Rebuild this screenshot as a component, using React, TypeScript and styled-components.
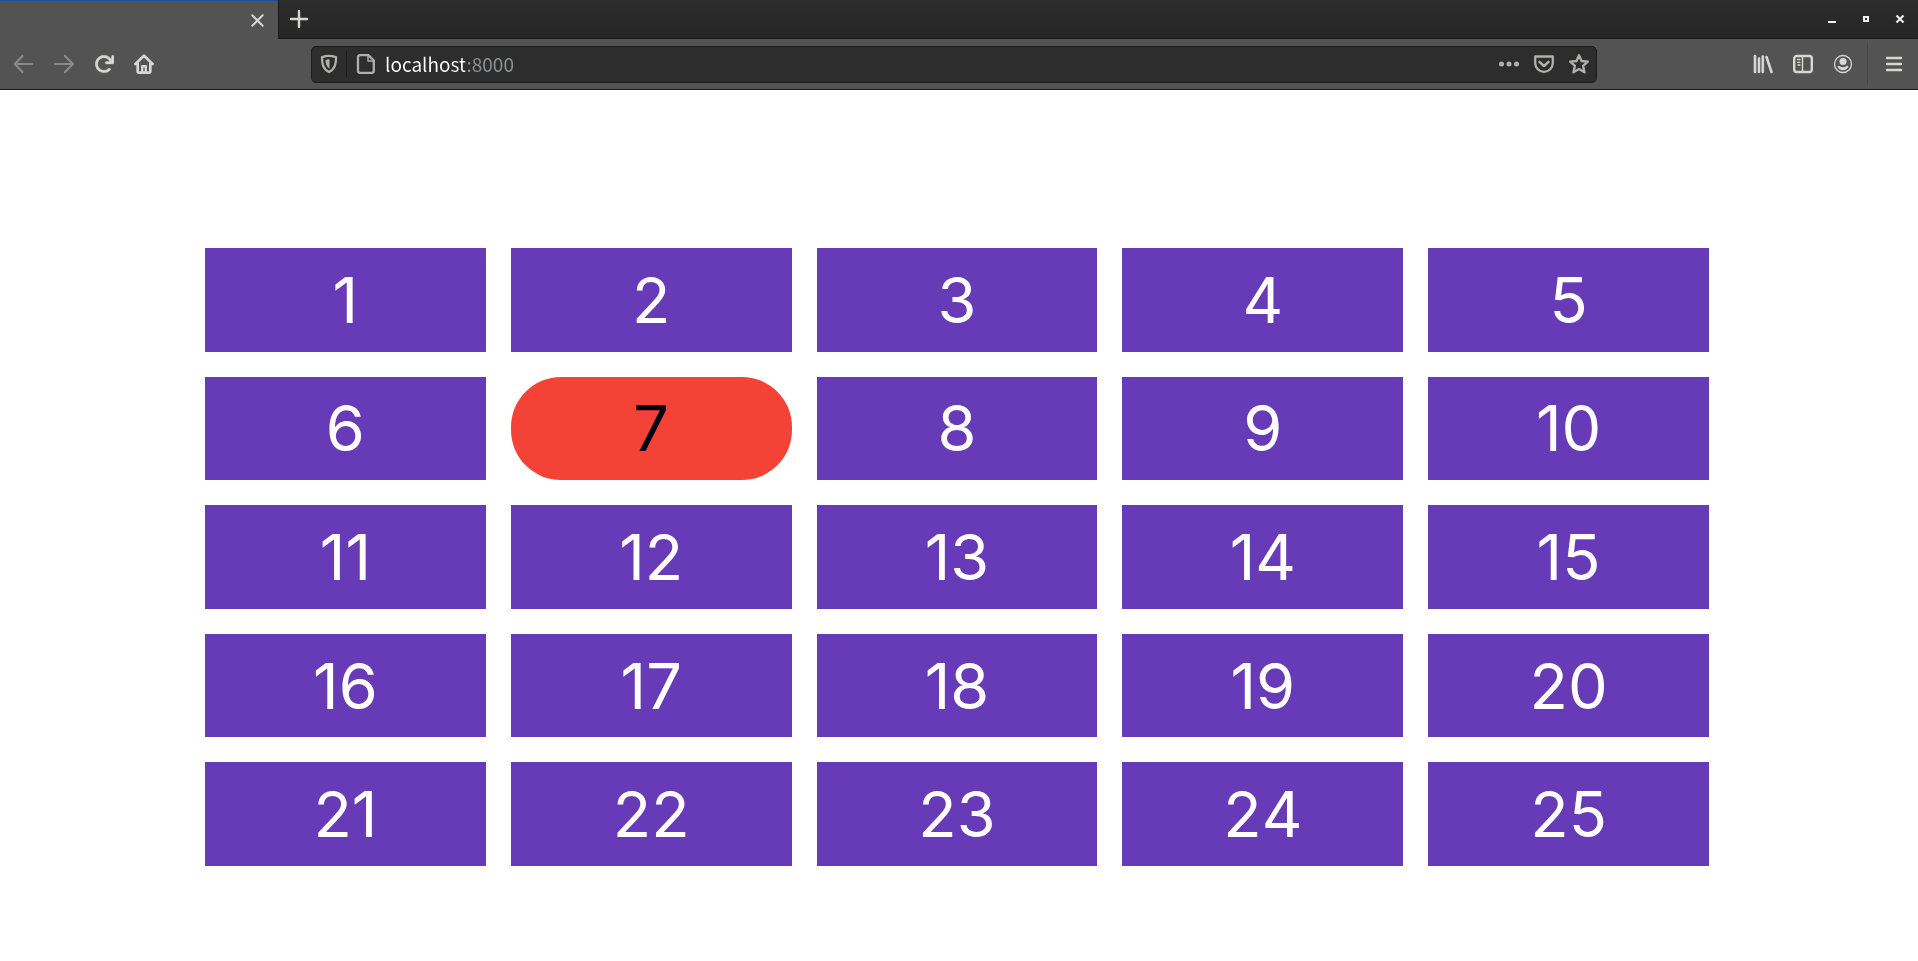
import React from "react";
import styled, { createGlobalStyle } from "styled-components";

const GlobalStyle = createGlobalStyle`
  *, *::before, *::after { box-sizing: border-box; }
  body {
    margin: 0;
    background: #ffffff;
    font-family: Inter, "Liberation Sans", sans-serif;
  }
`;

const Page = styled.div`
  display: flex;
  flex-direction: column;
  min-height: 100vh;
`;

const TitleBar = styled.header`
  display: flex;
  align-items: stretch;
  height: 39px;
  background: linear-gradient(#2c2c2c, #262626);
`;

const Tab = styled.div`
  display: flex;
  align-items: center;
  justify-content: flex-end;
  width: 278px;
  padding-right: 11px;
  background: #535353;
  border-top: 1px solid #15539e;
`;

const TabStrip = styled.div`
  display: flex;
  flex: 1;
  align-items: center;
  justify-content: space-between;
  padding-right: 1px;
  border-left: 1px solid #1a1a1a;
  border-bottom: 1px solid #1a1a1a;
`;

const WindowControls = styled.div`
  display: flex;
`;

const IconButton = styled.button<{ $width?: number; $dim?: boolean }>`
  display: flex;
  align-items: center;
  justify-content: center;
  width: ${(p) => p.$width ?? 40}px;
  height: 36px;
  padding: 0;
  border: 0;
  background: none;
  color: ${(p) => (p.$dim ? "#8a8a88" : "#d6d6d4")};
`;

const Toolbar = styled.nav`
  display: grid;
  grid-template-columns: 311px 1fr 321px;
  align-items: center;
  height: 51px;
  background: #535353;
  border-bottom: 1px solid #1c1a1c;
`;

const ToolGroup = styled.div<{ $end?: boolean }>`
  display: flex;
  align-items: center;
  justify-content: ${(p) => (p.$end ? "flex-end" : "flex-start")};
  padding: 0 4px;
`;

const ToolDivider = styled.span`
  width: 1px;
  height: 42px;
  margin: 0 6px 0 4px;
  background: #484848;
`;

const AddressBar = styled.form`
  display: flex;
  align-items: center;
  height: 37px;
  min-width: 0;
  border: 1px solid #1c1c1c;
  border-radius: 5px;
  background: #2d2d2d;
`;

const AddressButton = styled(IconButton)`
  color: #b0b0af;
`;

const AddressDivider = styled.span`
  width: 1px;
  height: 26px;
  background: #1c1c1c;
`;

const AddressInput = styled.input`
  flex: 1;
  min-width: 0;
  height: 34px;
  padding: 0;
  border: 0;
  outline: 0;
  background: linear-gradient(to right, #ffffff 80px, #8e9192 80px);
  background-clip: text;
  -webkit-background-clip: text;
  color: transparent;
  font: 19px/34px "Noto Sans CJK SC", "Noto Sans", sans-serif;
`;

const Main = styled.main`
  display: flex;
  flex: 1;
  padding: 158px 209px 95px 205px;
`;

const Grid = styled.section`
  display: grid;
  flex: 1;
  grid-template-columns: repeat(5, 1fr);
  grid-template-rows: repeat(5, 1fr);
  gap: 25px;
`;

const Cell = styled.div<{ $active?: boolean }>`
  display: flex;
  align-items: center;
  justify-content: center;
  border-radius: ${(p) => (p.$active ? 50 : 0)}px;
  background: ${(p) => (p.$active ? "#f44336" : "#673ab7")};
  color: ${(p) => (p.$active ? "#020210" : "#ffffff")};
  font-size: 63px;
  font-kerning: none;
  line-height: 78px;
`;

type IconProps = { size?: number; children: React.ReactNode };

const Icon = ({ size = 20, children }: IconProps) => (
  <svg width={size} height={size} viewBox="0 0 20 20" fill="none" stroke="currentColor" strokeWidth="2" strokeLinecap="round" strokeLinejoin="round" aria-hidden="true">
    {children}
  </svg>
);

const PixelIcon = ({ children }: { children: React.ReactNode }) => (
  <svg width="12" height="12" viewBox="0 0 12 12" fill="none" stroke="#f2f2f0" strokeWidth="2" aria-hidden="true">
    {children}
  </svg>
);

const numbers = Array.from({ length: 25 }, (_, i) => i + 1);
const activeNumber = 7;

export default function App() {
  return (
    <Page>
      <GlobalStyle />
      <TitleBar>
        <Tab>
          <IconButton $width={20} aria-label="Close tab">
            <Icon size={13}><path d="M2 2l16 16M18 2L2 18" strokeWidth="3" /></Icon>
          </IconButton>
        </Tab>
        <TabStrip>
          <IconButton aria-label="New tab">
            <Icon><path d="M10 2v16M2 10h16" strokeWidth="2.4" /></Icon>
          </IconButton>
          <WindowControls>
            <IconButton $width={34} aria-label="Minimize">
              <PixelIcon><path d="M2 9h8" /></PixelIcon>
            </IconButton>
            <IconButton $width={34} aria-label="Maximize">
              <PixelIcon><path d="M4 4h4v4h-4z" /></PixelIcon>
            </IconButton>
            <IconButton $width={34} aria-label="Close">
              <PixelIcon><path d="M2.5 2.5l7 7M9.5 2.5l-7 7" /></PixelIcon>
            </IconButton>
          </WindowControls>
        </TabStrip>
      </TitleBar>
      <Toolbar>
        <ToolGroup>
          <IconButton $dim aria-label="Back">
            <Icon><path d="M18 10H1.200M8.500 2L0.800 10l7.700 8" strokeWidth="2.2" /></Icon>
          </IconButton>
          <IconButton $dim aria-label="Forward">
            <Icon><path d="M1.200 10h17.300M11 2l8 8-8 8" strokeWidth="2.2" /></Icon>
          </IconButton>
          <IconButton aria-label="Reload">
            <svg width="20" height="20" viewBox="0 0 16 16" fill="currentColor" stroke="currentColor" strokeWidth="0.3" aria-hidden="true">
              <path d="M15 1a1 1 0 0 0-1 1v2.418A6.995 6.995 0 1 0 8 15a6.954 6.954 0 0 0 4.950-2.050 1 1 0 0 0-1.414-1.414A5.019 5.019 0 1 1 12.549 6H10a1 1 0 0 0 0 2h5a1 1 0 0 0 1-1V2a1 1 0 0 0-1-1z" />
            </svg>
          </IconButton>
          <IconButton aria-label="Home">
            <Icon>
              <path d="M1.400 10L10 1.600l8.600 8.400M3.700 9.500v8a1.200 1.200 0 0 0 1.200 1.200h10.200a1.200 1.200 0 0 0 1.200-1.200v-8" strokeWidth="2.700" />
              <path d="M8.200 18.500v-6.300h3.600v6.300" strokeWidth="2.400" />
            </Icon>
          </IconButton>
        </ToolGroup>
        <AddressBar>
          <AddressButton type="button" $width={34} aria-label="Tracking protection">
            <Icon>
              <path d="M10 1.800C7.500 1.800 5 2.500 3 3.200c0 6 .5 11.500 7 14.800 6.500-3.300 7-8.800 7-14.800-2-.7-4.500-1.400-7-1.400z" strokeWidth="2.300" />
              <path d="M10.500 5.200c-1.500 0-3 .3-4 .7.100 3.600.8 6.700 4 8.900z" fill="currentColor" stroke="none" />
            </Icon>
          </AddressButton>
          <AddressDivider />
          <AddressButton type="button" $width={38} aria-label="Site information">
            <Icon>
              <path d="M4 1.200h8.500L17.800 6.500V16.800a2 2 0 0 1-2 2H4a2 2 0 0 1-2-2V3.200a2 2 0 0 1 2-2z" strokeWidth="2.300" />
              <path d="M12 1.500V7h5.500" strokeWidth="1.500" />
            </Icon>
          </AddressButton>
          <AddressInput aria-label="Address" defaultValue="localhost:8000" spellCheck={false} />
          <AddressButton type="button" $width={35} aria-label="Page actions">
            <Icon>
              <g fill="currentColor" stroke="none">
                <circle cx="2.500" cy="10" r="2.500" />
                <circle cx="10" cy="10" r="2.500" />
                <circle cx="17.500" cy="10" r="2.500" />
              </g>
            </Icon>
          </AddressButton>
          <AddressButton type="button" $width={35} aria-label="Save to Pocket">
            <Icon>
              <path d="M1.200 2.500h17.600v6.500a8.800 8.800 0 0 1-17.600 0z" strokeWidth="2.300" />
              <path d="M5.500 7.800l4.500 4.200 4.500-4.200" strokeWidth="2.500" />
            </Icon>
          </AddressButton>
          <AddressButton type="button" $width={35} aria-label="Bookmark this page">
            <Icon>
              <path d="M10 1.300l2.500 5.700 6.300.6-4.700 4.200 1.400 6.500L10 15.100l-5.500 3.200 1.400-6.500L1.200 7.600 7.500 7z" strokeWidth="2.300" />
            </Icon>
          </AddressButton>
        </AddressBar>
        <ToolGroup $end>
          <IconButton aria-label="Library">
            <Icon><path d="M2 2v16M6 4.500v13.500M9.800 2.500v15.500M13.500 3l5 15" strokeWidth="2.600" /></Icon>
          </IconButton>
          <IconButton aria-label="Sidebars">
            <Icon>
              <rect x="1.200" y="2" width="17.600" height="16" rx="2.500" strokeWidth="2.400" />
              <path d="M9.500 2.500v15" strokeWidth="1.500" />
              <path d="M4.500 5.500h2.500M4.500 8.300h2.500M5 11h2" strokeWidth="1.300" />
            </Icon>
          </IconButton>
          <IconButton aria-label="Account">
            <Icon>
              <circle cx="10" cy="10" r="8.500" strokeWidth="1.300" />
              <circle cx="10" cy="7.500" r="3.600" fill="currentColor" stroke="none" />
              <path d="M4.500 12.200c1.200-.8 2-.3 2.800.2 1.700 1 3.700 1 5.400 0 .8-.5 1.600-1 2.800-.2-.8 2.500-3 4-5.500 4s-4.700-1.500-5.500-4z" fill="currentColor" stroke="none" />
            </Icon>
          </IconButton>
          <ToolDivider />
          <IconButton aria-label="Open menu">
            <Icon><path d="M3 4h14M3 10h14M3 16h14" strokeWidth="2.400" /></Icon>
          </IconButton>
        </ToolGroup>
      </Toolbar>
      <Main>
        <Grid>
          {numbers.map((n) => (
            <Cell key={n} $active={n === activeNumber}>{n}</Cell>
          ))}
        </Grid>
      </Main>
    </Page>
  );
}
